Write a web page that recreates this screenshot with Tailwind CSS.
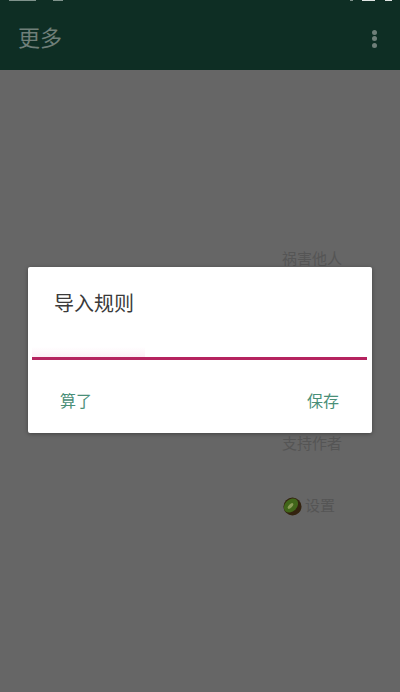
<!DOCTYPE html>
<html>
<head>
  <title>更多</title>
  <meta charset="utf-8">
  <script src="https://cdn.jsdelivr.net/npm/@tailwindcss/browser@4"></script>
</head>
<body class="w-[400px] h-[692px] overflow-hidden bg-[#666666] font-['Roboto','Noto_Sans_CJK_SC',sans-serif]">
  <div class="relative w-[400px] h-[692px]">
    <!-- Status bar, cut off by the top edge -->
    <div class="h-[4px] bg-[#0e2e24] flex justify-between overflow-hidden">
      <div class="flex pl-[9px] h-[1px]">
        <div class="w-[27px] bg-[#7f938c]"></div>
        <div class="w-[10px] ml-[17px] bg-[#7f938c]"></div>
      </div>
      <div class="flex pr-[8px] h-[1px]">
        <div class="w-[3px] mr-[9px] bg-[#7f938c]"></div>
        <div class="w-[13px] mr-[10px] bg-[#dfe5e3]"></div>
        <div class="w-[7px] bg-[#dfe5e3]"></div>
      </div>
    </div>

    <!-- Toolbar -->
    <div class="h-[66px] bg-[#0e2e24] flex items-center justify-between pl-[18px] pr-[23px] pt-[3px]">
      <span class="text-[22px] text-[#6f7f79]">更多</span>
      <div class="flex flex-col gap-[1.5px]">
        <div class="w-[5px] h-[5px] rounded-full bg-[#6f7f79]"></div>
        <div class="w-[5px] h-[5px] rounded-full bg-[#6f7f79]"></div>
        <div class="w-[5px] h-[5px] rounded-full bg-[#6f7f79]"></div>
      </div>
    </div>

    <!-- List behind the scrim -->
    <div class="absolute left-[282px] top-[248px] text-[15px] leading-[22px] text-[#555555]">祸害他人</div>
    <div class="absolute left-[282px] top-[433px] text-[15px] leading-[22px] text-[#555555]">支持作者</div>
    <div class="absolute left-[283px] top-[495px] flex items-center gap-[3px] text-[15px] leading-[22px] text-[#555555]">
      <svg width="19" height="19" viewBox="0 0 19 19" class="block">
        <circle cx="9.5" cy="9.5" r="9" fill="#33230f"/>
        <ellipse cx="8" cy="8.5" rx="6" ry="8" transform="rotate(45 8 8.5)" fill="#41661a"/>
        <ellipse cx="7.5" cy="9" rx="1.6" ry="3.6" transform="rotate(45 7.5 9)" fill="#8a9c58"/>
      </svg>
      <span>设置</span>
    </div>

    <!-- Dialog -->
    <div class="absolute left-[28px] top-[267px] w-[344px] h-[166px] rounded-[2px] bg-white shadow-[0_1px_4px_rgba(0,0,0,0.35)] flex flex-col">
      <h2 class="pl-[26px] pt-[22px] text-[20px] leading-[30px] text-[#3a3a3a]">导入规则</h2>
      <div class="mt-[28px] ml-[4px] w-[113px] h-[10px] bg-gradient-to-b from-white to-[#fdeff6]"></div>
      <div class="ml-[4px] mr-[5px] h-[3px] bg-[#b5235f]"></div>
      <div class="flex justify-between pl-[32px] pr-[33px] mt-[31px] text-[16px] leading-[22px] text-[#4a8f78]">
        <span>算了</span>
        <span>保存</span>
      </div>
    </div>
  </div>
</body>
</html>
